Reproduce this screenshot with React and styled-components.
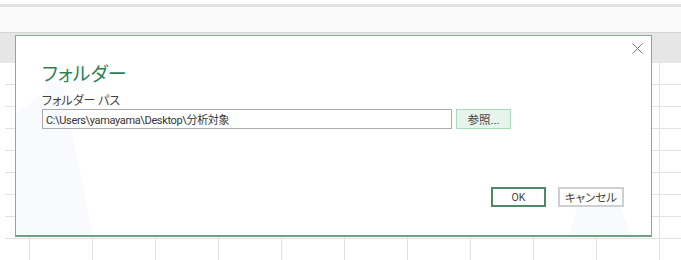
import React from "react";
import styled, { createGlobalStyle } from "styled-components";

const Global = createGlobalStyle`
  html, body { margin: 0; padding: 0; background: #ffffff; }
  body { font-family: "Noto Sans", "Noto Sans CJK JP", sans-serif; }
`;

const Screen = styled.div`
  position: relative;
  width: 681px;
  height: 260px;
  overflow: hidden;
  display: flex;
  flex-direction: column;
  background: #ffffff;
`;

const TopGap = styled.div`
  height: 4px;
  background: #ffffff;
`;

const RibbonEdge = styled.div`
  height: 3px;
  background: #e3e3e3;
`;

const FormulaBar = styled.div`
  height: 25px;
  background: #fafafa;
  border-bottom: 1px solid #d6d6d6;
`;

const HeaderBand = styled.div`
  height: 30px;
  background: #e6e6e6;
`;

const Sheet = styled.div`
  flex: 1;
  padding-left: 5px;
  display: flex;
`;

const Grid = styled.div`
  flex: 1;
  background-color: #ffffff;
  background-image:
    linear-gradient(to right, #e2e2e2 1px, transparent 1px),
    linear-gradient(to bottom, #e2e2e2 1px, transparent 1px);
  background-size: 63px 100%, 100% 22px;
  background-position: 24px 0, 0 21px;
`;

const Dialog = styled.div`
  position: absolute;
  left: 15px;
  top: 35px;
  width: 637px;
  height: 202px;
  box-sizing: border-box;
  background: #ffffff;
  border: 1px solid #7fae90;
  border-bottom: 2px solid #6fa283;
  display: flex;
  flex-direction: column;
  padding: 25px 27px 28px 26px;
`;

const Watermark = styled.svg`
  position: absolute;
  inset: 0;
  width: 100%;
  height: 100%;
  pointer-events: none;
`;

const CloseButton = styled.button`
  position: absolute;
  top: 6px;
  right: 8px;
  width: 12px;
  height: 12px;
  padding: 0;
  border: none;
  background: transparent;
  display: flex;
  align-items: center;
  justify-content: center;
`;

const Title = styled.h1`
  position: relative;
  margin: 0;
  font-family: "Noto Sans CJK JP", sans-serif;
  font-feature-settings: "palt";
  font-weight: 400;
  font-size: 19px;
  line-height: 24px;
  color: #2f7f55;
`;

const FieldLabel = styled.label`
  position: relative;
  margin-top: 7px;
  font-family: "Noto Sans CJK JP", sans-serif;
  font-feature-settings: "palt";
  font-size: 12px;
  line-height: 16px;
  color: #444444;
`;

const FieldRow = styled.div`
  position: relative;
  margin-top: 1px;
  display: flex;
  gap: 4px;
  align-items: center;
`;

const PathInput = styled.div`
  width: 410px;
  height: 20px;
  box-sizing: border-box;
  border: 1px solid #ababab;
  padding: 0 3px;
  display: flex;
  align-items: center;
  font-family: Roboto, "Noto Sans CJK JP", sans-serif;
  font-feature-settings: "palt";
  font-size: 11px;
  letter-spacing: -0.35px;
  color: #333333;
  white-space: nowrap;
`;

const Footer = styled.div`
  position: relative;
  margin-top: auto;
  display: flex;
  justify-content: flex-end;
  gap: 12px;
`;

const Button = styled.button`
  width: ${(p) => p.$w}px;
  height: 20px;
  box-sizing: border-box;
  padding: 0;
  font-family: Roboto, "Noto Sans CJK JP", sans-serif;
  font-feature-settings: "palt";
  font-size: ${(p) => (p.$small ? 10.5 : 11.5)}px;
  color: #444444;
  display: flex;
  align-items: center;
  justify-content: center;
  background: ${(p) =>
    p.$variant === "browse" ? "#e7f4ec" : "#ffffff"};
  border: ${(p) =>
    p.$variant === "browse"
      ? "1px dotted #8fcca6"
      : p.$variant === "primary"
      ? "2px solid #4f8a66"
      : "2px solid #cfcfcf"};
  outline: ${(p) => (p.$variant === "browse" ? "1px solid #a7dbbc" : "none")};
  outline-offset: -1px;
`;

export default function App() {
  return (
    <>
      <Global />
      <Screen>
        <TopGap />
        <RibbonEdge />
        <FormulaBar />
        <HeaderBand />
        <Sheet>
          <Grid />
        </Sheet>
        <Dialog role="dialog">
          <Watermark viewBox="0 0 637 202" preserveAspectRatio="none">
            <polygon points="0,80 45,42 77,202 0,202" fill="#f9fafd" />
            <polygon points="555,202 565,168 605,168 617,202" fill="#f9fafd" />
          </Watermark>
          <CloseButton aria-label="閉じる">
            <svg width="11" height="11" viewBox="0 0 11 11">
              <path d="M0.5 0.5 L10.5 10.5 M10.5 0.5 L0.5 10.5" stroke="#7a7a7a" strokeWidth="1" fill="none" />
            </svg>
          </CloseButton>
          <Title>フォルダー</Title>
          <FieldLabel>フォルダー パス</FieldLabel>
          <FieldRow>
            <PathInput>C:\Users\yamayama\Desktop\分析対象</PathInput>
            <Button $variant="browse" $w={55}>参照...</Button>
          </FieldRow>
          <Footer>
            <Button $variant="primary" $w={55} $small>OK</Button>
            <Button $w={66}>キャンセル</Button>
          </Footer>
        </Dialog>
      </Screen>
    </>
  );
}
